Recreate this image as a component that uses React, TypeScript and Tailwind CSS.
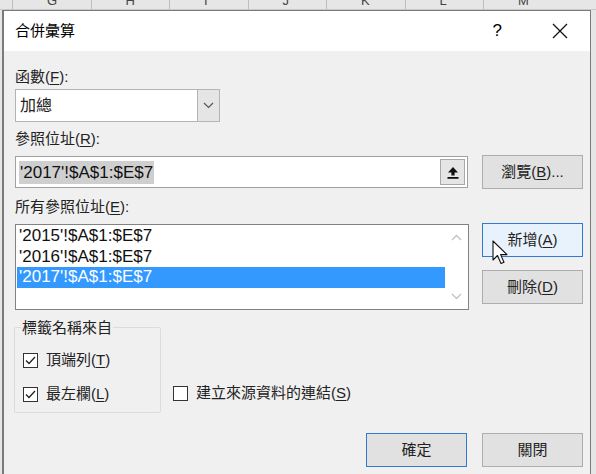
const latin = "font-['Liberation_Sans','Noto_Sans_CJK_TC',sans-serif]";

const Btn = ({ label, focused = false, hover = false }: { label: React.ReactNode; focused?: boolean; hover?: boolean }) => (
  <div
    className={`flex h-[34px] w-[101px] items-center justify-center border text-[15px] text-[#222] ${
      focused ? 'border-[#2f7bd0]' : 'border-[#adadad]'
    } ${hover ? 'bg-[#e8f2fc]' : 'bg-[#e1e1e1]'}`}
  >
    <span>{label}</span>
  </div>
);

const U = ({ c }: { c: string }) => <span className="underline underline-offset-2">{c}</span>;

const Check = ({ checked }: { checked: boolean }) => (
  <span className="flex h-[15px] w-[15px] shrink-0 items-center justify-center border border-[#333] bg-white">
    {checked && (
      <svg width="11" height="9" viewBox="0 0 11 9">
        <path d="M1 4.5 L4 7.5 L10 1" fill="none" stroke="#222" strokeWidth="1.3" />
      </svg>
    )}
  </span>
);

const CheckRow = ({ checked, children }: { checked: boolean; children: React.ReactNode }) => (
  <label className="flex h-[20px] items-center gap-[8px]">
    <Check checked={checked} />
    <span className="leading-[20px]">{children}</span>
  </label>
);

export default function App() {
  const cols = ['G', 'H', 'I', 'J', 'K', 'L', 'M'];
  return (
    <div className={`relative h-[474px] w-[596px] overflow-hidden bg-[#e6e6e6] ${latin}`}>
      {/* spreadsheet header peeking out */}
      <div className="flex h-[10px] overflow-hidden border-b border-[#c8c8c8] pl-[12px]">
        {cols.map((c) => (
          <div key={c} className="relative w-[78.5px] shrink-0 border-l border-[#bdbdbd]">
            <span className="absolute -top-[9px] left-[34px] text-[13px] text-[#444]">{c}</span>
          </div>
        ))}
      </div>

      <div className="ml-[2px] flex h-[470px] w-[589px] flex-col border-l-2 border-r border-t border-[#7a7a7a] bg-[#f0f0f0]">
        {/* title bar */}
        <div className="flex h-[40px] shrink-0 items-center bg-white pl-[11px] pr-[22px]">
          <span className="text-[15px] text-black">合併彙算</span>
          <span className="ml-auto mr-[50px] text-[17px] text-black">?</span>
          <svg width="16" height="16" viewBox="0 0 16 16">
            <path d="M1 1 L15 15 M15 1 L1 15" stroke="#111" strokeWidth="1.3" />
          </svg>
        </div>

        <div className="flex flex-col pl-[11px] text-[15px] text-[#222]">
          <div className="mt-[14px] flex h-[24px] items-center">
            <span>函數(<U c="F" />):</span>
          </div>
          {/* select */}
          <div className="flex h-[33px] w-[205px] border border-[#b4b4b4] bg-white">
            <span className="flex flex-1 items-center pl-[4px] text-[16px]">加總</span>
            <span className="flex w-[22px] items-center justify-center border-l border-[#b4b4b4] bg-[#e5e5e5]">
              <svg width="11" height="7" viewBox="0 0 11 7">
                <path d="M1 1 L5.5 5.5 L10 1" fill="none" stroke="#555" strokeWidth="1.2" />
              </svg>
            </span>
          </div>

          <div className="flex h-[34px] items-center">
            <span>參照位址(<U c="R" />):</span>
          </div>
          <div className="flex items-start">
            <div className="flex h-[32px] w-[453px] border border-[#a0a0a0] bg-white">
              <div className="flex flex-1 items-center pl-[3px]">
                <span className="bg-[#cfcfcf] px-[1px] text-[17px] leading-[23px] text-[#111]">'2017'!$A$1:$E$7</span>
              </div>
              <span className="m-[2px] flex w-[25px] items-center justify-center border border-[#a8a8a8] bg-[#e5e5e5]">
                <svg width="12" height="13" viewBox="0 0 12 13">
                  <path d="M6 1 L11 6.5 H7.6 V9.5 H4.4 V6.5 H1 Z" fill="#111" />
                  <rect x="0.5" y="11" width="11" height="1.8" fill="#111" />
                </svg>
              </span>
            </div>
            <div className="ml-[14px] -mt-[1px]">
              <Btn label={<>瀏覽(<U c="B" />)...</>} />
            </div>
          </div>

          <div className="flex h-[35px] items-center pt-[2px]">
            <span>所有參照位址(<U c="E" />):</span>
          </div>
          <div className="flex items-start">
            <div className="flex h-[86px] w-[454px] border border-[#828282] bg-white">
              <div className="flex flex-1 flex-col pl-[1px] pt-[1px] text-[17px] leading-[20.5px] text-[#111]">
                <span className="pl-[2px]">'2015'!$A$1:$E$7</span>
                <span className="pl-[2px]">'2016'!$A$1:$E$7</span>
                <span className="bg-[#3399ff] pl-[2px] text-white">'2017'!$A$1:$E$7</span>
              </div>
              <div className="flex w-[23px] flex-col items-center justify-between py-[9px]">
                <svg width="11" height="7" viewBox="0 0 11 7">
                  <path d="M1 6 L5.5 1.5 L10 6" fill="none" stroke="#c2c2c2" strokeWidth="1.3" />
                </svg>
                <svg width="11" height="7" viewBox="0 0 11 7">
                  <path d="M1 1 L5.5 5.5 L10 1" fill="none" stroke="#c2c2c2" strokeWidth="1.3" />
                </svg>
              </div>
            </div>
            <div className="relative ml-[13px] -mt-[1px] flex flex-col gap-[13px]">
              <Btn label={<>新增(<U c="A" />)</>} focused hover />
              <Btn label={<>刪除(<U c="D" />)</>} />
              {/* mouse cursor */}
              <svg className="absolute left-[10px] top-[17px]" width="17" height="26" viewBox="0 0 17 26">
                <path
                  d="M1 1 V20 L5.5 15.5 L9 23.5 L12 22.2 L8.6 14.6 H15 Z"
                  fill="#fff"
                  stroke="#111"
                  strokeWidth="1.1"
                  strokeLinejoin="round"
                />
              </svg>
            </div>
          </div>

          {/* bottom options */}
          <div className="mt-[17px] flex items-end">
            <div className="relative -ml-[1px] h-[86px] w-[147px] rounded-[2px] border border-[#dcdcdc]">
              <span className="absolute -top-[11px] left-[6px] bg-[#f0f0f0] px-[1px] text-[15px]">標籤名稱來自</span>
              <div className="mt-[22px] flex flex-col gap-[14px] pl-[8px]">
                <CheckRow checked>
                  頂端列(<U c="T" />)
                </CheckRow>
                <CheckRow checked>
                  最左欄(<U c="L" />)
                </CheckRow>
              </div>
            </div>
            <div className="mb-[10px] ml-[12px]">
              <CheckRow checked={false}>
                建立來源資料的連結(<U c="S" />)
              </CheckRow>
            </div>
          </div>

          <div className="mt-[20px] flex gap-[15px] pl-[351px]">
            <Btn label="確定" focused />
            <Btn label="關閉" />
          </div>
        </div>
      </div>
    </div>
  );
}
